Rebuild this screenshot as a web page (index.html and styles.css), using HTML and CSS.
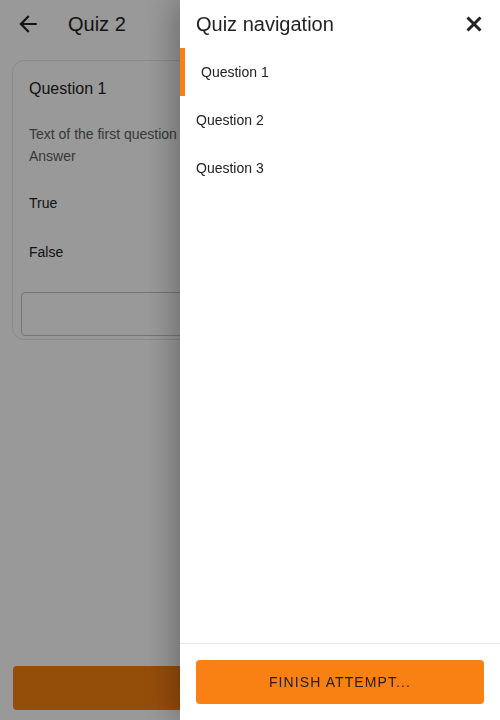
FILE: index.html
```html
<!DOCTYPE html>
<html lang="en">
<head>
  <meta charset="UTF-8">
  <title>Quiz 2</title>
  <link rel="stylesheet" href="styles.css">
</head>
<body>
<div class="page">
  <div class="toolbar">
    <svg class="back" viewBox="0 0 24 24" width="26" height="26">
      <path d="M20 11H7.83l5.59-5.59L12 4l-8 8 8 8 1.41-1.41L7.83 13H20v-2z" fill="#222"/>
    </svg>
    <div class="toolbar-title">Quiz 2</div>
  </div>

  <div class="content">
    <div class="card">
      <div class="card-title">Question 1</div>
      <div class="qtext">
        <div>Text of the first question</div>
        <div>Answer</div>
      </div>
      <ul class="options">
        <li>True</li>
        <li>False</li>
      </ul>
      <div class="check-box">Check</div>
    </div>
  </div>

  <div class="page-footer">
    <div class="btn-big"></div>
  </div>
</div>

<div class="backdrop"></div>

<!-- side menu -->
<div class="drawer">
  <div class="drawer-head">
    <div class="drawer-title">Quiz navigation</div>
    <svg class="close" viewBox="0 0 16 16" width="16" height="16">
      <path d="M1.5 1.5L14.5 14.5M14.5 1.5L1.5 14.5" stroke="#222" stroke-width="3" fill="none"/>
    </svg>
  </div>
  <ul class="nav-list">
    <li class="active">Question 1</li>
    <li>Question 2</li>
    <li>Question 3</li>
  </ul>
  <div class="drawer-foot">
    <div class="btn-finish">FINISH ATTEMPT...</div>
  </div>
</div>
</body>
</html>
```

FILE: styles.css
```css
body {
  margin: 0;
  padding: 0;
  font-family: "Liberation Sans", Arial, sans-serif;
  color: #222;
  background: #fff;
}
ul {
  list-style: none;
  margin: 0;
  padding: 0;
}
.page {
  height: 720px;
  display: flex;
  flex-direction: column;
}
.toolbar {
  height: 48px;
  display: flex;
  align-items: center;
  flex-shrink: 0;
}
.back {
  margin-left: 15px;
}
.toolbar-title {
  margin-left: 27px;
  font-size: 20px;
  color: #222;
}
.content {
  flex: 1;
  padding: 12px 12px 0 12px;
}
.card {
  border: 1px solid #e4e4e4;
  border-radius: 12px;
  height: 278px;
}
.card-title {
  padding: 16px 16px 0 16px;
  font-size: 16px;
  line-height: 24px;
}
.qtext {
  margin-top: 22px;
  padding: 0 16px;
  font-size: 14px;
  line-height: 22px;
  color: #5e5e5e;
}
.options {
  margin-top: 12px;
}
.options li {
  height: 48px;
  line-height: 48px;
  padding-left: 16px;
  font-size: 14px;
  margin-bottom: 1px;
}
.check-box {
  margin: 16px 8px 0 8px;
  height: 42px;
  line-height: 42px;
  border: 1px solid #c4c4c4;
  border-radius: 4px;
  text-align: center;
  font-size: 14px;
  color: #555;
}
.page-footer {
  padding: 0 13px 10px 13px;
}
.btn-big {
  height: 44px;
  background: #f98012;
  border-radius: 4px;
}

.backdrop {
  position: fixed;
  top: 0;
  left: 0;
  right: 0;
  bottom: 0;
  background: rgba(0, 0, 0, 0.4);
}
.drawer {
  position: fixed;
  top: 0;
  right: 0;
  width: 320px;
  height: 720px;
  background: #fff;
  box-shadow: -6px 0 30px rgba(0, 0, 0, 0.3);
  display: flex;
  flex-direction: column;
}
.drawer-head {
  height: 48px;
  display: flex;
  align-items: center;
  justify-content: space-between;
  padding: 0 18px 0 16px;
}
.drawer-title {
  font-size: 20px;
  color: #222;
}
.nav-list {
  flex: 1;
}
.nav-list li {
  height: 48px;
  line-height: 48px;
  padding-left: 16px;
  font-size: 14px;
  color: #222;
}
.nav-list li.active {
  border-left: 5px solid #f98012;
  padding-left: 16px;
}
.drawer-foot {
  border-top: 1px solid #e8e8e8;
  padding: 16px;
}
.btn-finish {
  height: 44px;
  line-height: 44px;
  background: #f98012;
  border-radius: 4px;
  text-align: center;
  font-size: 14px;
  letter-spacing: 1.1px;
  color: #222;
}
```
